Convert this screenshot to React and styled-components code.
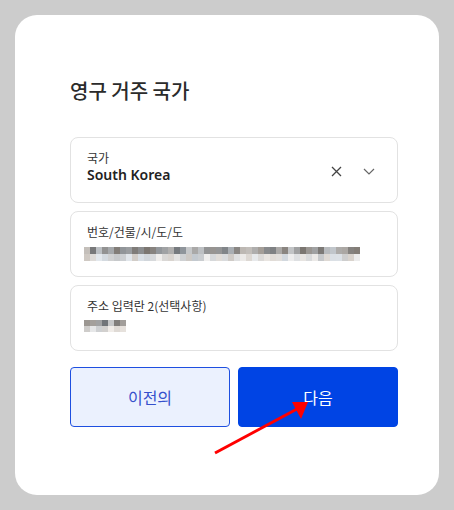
import React from 'react';
import styled, { createGlobalStyle } from 'styled-components';

const GlobalStyle = createGlobalStyle`
  html, body {
    margin: 0;
    padding: 0;
    background: #cccccc;
    font-family: "Noto Sans CJK KR", "Noto Sans", "Liberation Sans", sans-serif;
  }
`;

const Page = styled.div`
  width: 454px;
  height: 510px;
  padding: 15px;
  box-sizing: border-box;
  background: #cccccc;
`;

const Card = styled.div`
  position: relative;
  width: 424px;
  height: 480px;
  box-sizing: border-box;
  background: #fff;
  border-radius: 22px;
  padding: 62px 41px 0 55px;
  display: flex;
  flex-direction: column;
`;

const Title = styled.h1`
  margin: 0 0 32px;
  font-size: 20px;
  line-height: 28px;
  font-weight: 500;
  color: #2b2b2b;
`;

const Fields = styled.div`
  display: flex;
  flex-direction: column;
  gap: 8px;
`;

const Field = styled.div`
  height: 66px;
  box-sizing: border-box;
  border: 1px solid #e2e2e2;
  border-radius: 8px;
  padding: 12px 16px 0 16px;
  display: flex;
  align-items: flex-start;
  justify-content: space-between;
`;

const FieldText = styled.div`
  display: flex;
  flex-direction: column;
`;

const Label = styled.span`
  font-size: 12px;
  line-height: 16px;
  color: #333;
`;

const Value = styled.span`
  font-family: "Noto Sans", "Liberation Sans", sans-serif;
  font-size: 14px;
  line-height: 18px;
  font-weight: 600;
  color: #222;
`;

const Controls = styled.div`
  display: flex;
  align-items: center;
  gap: 21px;
  padding-top: 16px;
  padding-right: 6px;
`;

const Mosaic = styled.div`
  display: grid;
  grid-template-columns: repeat(${p => p.cols}, 6px);
  grid-auto-rows: ${p => p.rowH}px;
  margin-top: ${p => p.top}px;
  margin-left: -3px;
`;

const Pixel = styled.span`
  background: ${p => p.color};
`;

const Buttons = styled.div`
  display: grid;
  grid-template-columns: 1fr 1fr;
  gap: 8px;
  margin-top: 16px;
`;

const Button = styled.button`
  height: 60px;
  border-radius: 4px;
  font-family: "Noto Sans CJK KR", "Noto Sans", sans-serif;
  font-size: 16px;
  cursor: pointer;
  border: 1px solid ${p => (p.primary ? '#0044e4' : '#1e4fe0')};
  background: ${p => (p.primary ? '#0044e4' : '#ebf1fe')};
  color: ${p => (p.primary ? '#fff' : '#3550cc')};
`;

const Arrow = styled.svg`
  position: absolute;
  left: 0;
  top: 0;
  pointer-events: none;
`;

function seeded(seed) {
  let s = seed;
  return () => {
    s = (s * 9301 + 49297) % 233280;
    return s / 233280;
  };
}

function pixels(cols, seed) {
  const rnd = seeded(seed);
  const out = [];
  for (let r = 0; r < 2; r++) {
    for (let c = 0; c < cols; c++) {
      const base = r === 0 ? 115 : 200;
      const spread = r === 0 ? 85 : 40;
      const v = Math.round(base + rnd() * spread);
      const tint = Math.round((rnd() - 0.5) * 12);
      out.push(`rgb(${v + tint},${v},${v - tint})`);
    }
  }
  return out;
}

function PixelText({ cols, seed, rowH, top }) {
  return (
    <Mosaic cols={cols} rowH={rowH} top={top}>
      {pixels(cols, seed).map((c, i) => <Pixel key={i} color={c} />)}
    </Mosaic>
  );
}

export default function App() {
  return (
    <Page>
      <GlobalStyle />
      <Card>
        <Title>영구 거주 국가</Title>
        <Fields>
          <Field>
            <FieldText>
              <Label>국가</Label>
              <Value>South Korea</Value>
            </FieldText>
            <Controls>
              <svg width="11" height="11" viewBox="0 0 11 11">
                <path d="M1 1L10 10M10 1L1 10" stroke="#444" strokeWidth="1.3" />
              </svg>
              <svg width="12" height="7" viewBox="0 0 12 7">
                <path d="M1 1L6 6L11 1" stroke="#666" strokeWidth="1.2" fill="none" />
              </svg>
            </Controls>
          </Field>
          <Field>
            <FieldText>
              <Label>번호/건물/시/도/도</Label>
              <PixelText cols={46} seed={17} rowH={7} top={7} />
            </FieldText>
          </Field>
          <Field>
            <FieldText>
              <Label>주소 입력란 2(선택사항)</Label>
              <PixelText cols={7} seed={5} rowH={6} top={6} />
            </FieldText>
          </Field>
        </Fields>
        <Buttons>
          <Button>이전의</Button>
          <Button primary>다음</Button>
        </Buttons>
        <Arrow width="424" height="480" viewBox="0 0 424 480">
          <line x1="200" y1="438" x2="282" y2="394" stroke="#f00" strokeWidth="3" />
          <polygon points="293,387 277,387 286,404" fill="#f00" />
        </Arrow>
      </Card>
    </Page>
  );
}
